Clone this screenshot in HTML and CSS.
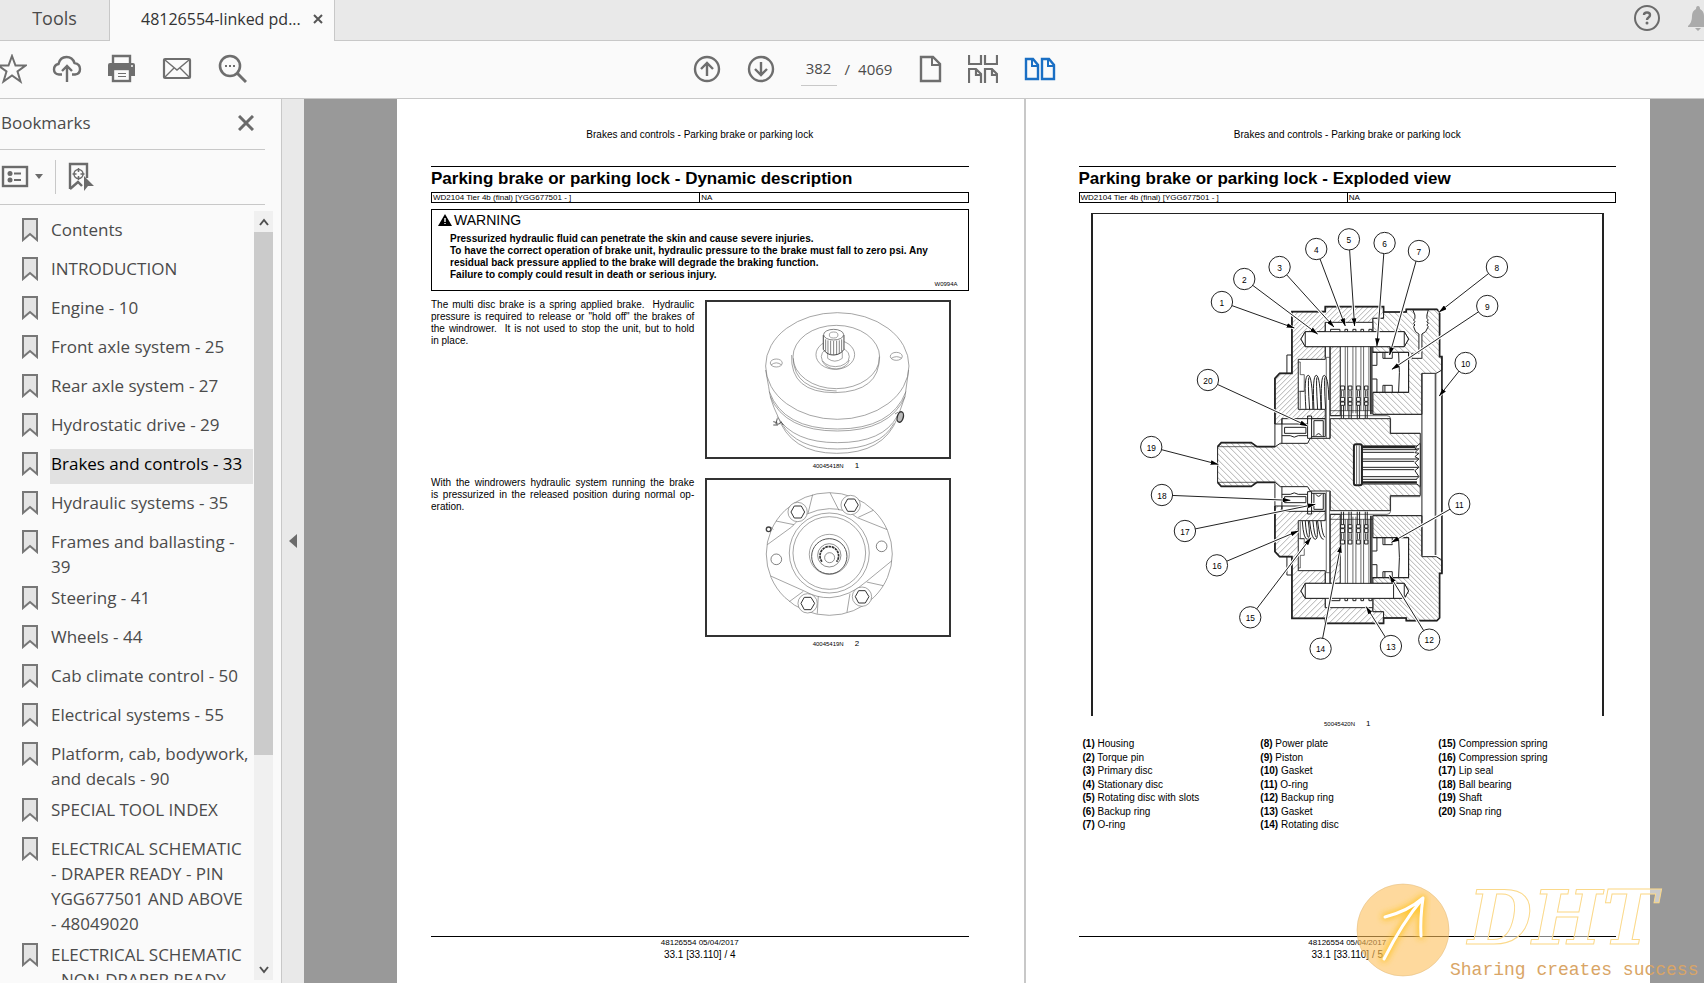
FILE: index.html
```html
<!DOCTYPE html>
<html lang="en">

<head>
  <meta charset="UTF-8">
  <meta name="viewport" content="width=device-width, initial-scale=1.0">
  <title>48126554-linked pdf</title>
  <link rel="stylesheet" href="styles.css">
</head>

<body>
  <!-- shared icon -->
  <svg class="defs" width="0" height="0" aria-hidden="true">
    <symbol id="bookmark" viewBox="0 0 16 24">
      <path d="M1 1H15V22L8 16L1 22Z" fill="#e4e4e4" stroke="#777" stroke-width="2"/>
    </symbol>
  </svg>

  <div class="app">
    <header class="tabs">
      <button class="tab">Tools</button>
      <div class="tab active">
        <span>48126554-linked pd...</span>
        <button aria-label="Close tab"><svg width="10" height="10" viewBox="0 0 10 10"><path d="M1 1L9 9M9 1L1 9" stroke="#555" stroke-width="2"/></svg></button>
      </div>
      <div class="tabs-right">
        <button aria-label="Help">
          <svg width="28" height="28" viewBox="0 0 28 28"><circle cx="14" cy="14" r="12" fill="none" stroke="#6b6b6b" stroke-width="2"/><path d="M11 11Q11 8.500 14 8.500Q17 8.500 17 11Q17 12.500 15.500 13.500Q14 14.500 14 16" fill="none" stroke="#6b6b6b" stroke-width="2.400"/><circle cx="14" cy="19" r="1.500" fill="#6b6b6b"/></svg>
        </button>
        <button aria-label="Notifications">
          <svg width="24" height="28" viewBox="0 0 24 28"><path d="M12 2Q14 2 14 5Q18 7 18 12Q18 19 22 22V23H2V22Q6 19 6 12Q6 7 10 5Q10 2 12 2ZM9 24H15L12 27Z" fill="#ababab"/></svg>
        </button>
      </div>
    </header>

    <nav class="toolbar">
      <div class="tools-left">
        <button aria-label="Star"><svg width="30" height="30" viewBox="0 0 30 30"><path d="M15 2L18.500 11.500H28.500L20.500 17.500L23.500 27.500L15 21.500L6.500 27.500L9.500 17.500L1.500 11.500H11.500Z" fill="none" stroke="#6e6e6e" stroke-width="2"/></svg></button>
        <button aria-label="Upload"><svg width="30" height="30" viewBox="0 0 30 30"><path d="M10 20.500H7Q2 20 2 15.500Q2 11 6.500 10Q8 3 14.500 3Q20.500 3 22.500 9Q28 10 28 15Q28 20 23 20.500H20" fill="none" stroke="#6e6e6e" stroke-width="2.400"/><path d="M15 28V13M10 17L15 12L20 17" fill="none" stroke="#6e6e6e" stroke-width="2.400"/></svg></button>
        <button aria-label="Print"><svg width="30" height="30" viewBox="0 0 30 30"><path d="M6 10V2H23V10" fill="none" stroke="#6e6e6e" stroke-width="2.400"/><path d="M3 9H26Q28 9 28 11V22H1V11Q1 9 3 9Z" fill="#6e6e6e"/><rect x="6" y="15" width="17" height="12" fill="#fafafa" stroke="#6e6e6e" stroke-width="2.400"/><path d="M11 19.500H19M11 22.500H19" stroke="#6e6e6e"/><circle cx="25" cy="12" r="1" fill="#fafafa"/></svg></button>
        <button aria-label="Email"><svg width="30" height="30" viewBox="0 0 30 30"><rect x="2" y="5" width="26" height="19" rx="1" fill="none" stroke="#6e6e6e" stroke-width="2.200"/><path d="M3 6L15 16L27 6M3 23L12 14M27 23L18 14" fill="none" stroke="#6e6e6e" stroke-width="1.400"/></svg></button>
        <button aria-label="Search"><svg width="30" height="30" viewBox="0 0 30 30"><circle cx="13" cy="12" r="10" fill="none" stroke="#6e6e6e" stroke-width="2.600"/><path d="M20 19L29 28" stroke="#6e6e6e" stroke-width="3"/><path d="M8 12H10M12 12H14M16 12H18" stroke="#6e6e6e" stroke-width="2"/></svg></button>
      </div>
      <div class="tools-center">
        <button aria-label="Previous page"><svg width="28" height="28" viewBox="0 0 28 28"><circle cx="14" cy="14" r="12" fill="none" stroke="#6e6e6e" stroke-width="2.400"/><path d="M14 21V8M8 14L14 8L20 14" fill="none" stroke="#6e6e6e" stroke-width="2.400"/></svg></button>
        <button aria-label="Next page"><svg width="28" height="28" viewBox="0 0 28 28"><circle cx="14" cy="14" r="12" fill="none" stroke="#6e6e6e" stroke-width="2.400"/><path d="M14 7V20M8 14L14 20L20 14" fill="none" stroke="#6e6e6e" stroke-width="2.400"/></svg></button>
        <div class="page-number">
          <input type="text" value="382" aria-label="Page number">
          <span>/</span>
          <span>4069</span>
        </div>
        <button aria-label="Single page"><svg width="24" height="28" viewBox="0 0 24 28"><path d="M3 2H15L22 9V26H3Z" fill="none" stroke="#6e6e6e" stroke-width="2.400"/><path d="M14 2V10H22" fill="none" stroke="#6e6e6e" stroke-width="2"/></svg></button>
        <button aria-label="Scrolling"><svg width="30" height="30" viewBox="0 0 30 30"><path d="M1 1V10H13V1M17 1V10H29V1M1 29V15H8L13 20V29M17 29V15H24L29 20V29M8 15V21H13M24 15V21H29" fill="none" stroke="#6e6e6e" stroke-width="2.200"/></svg></button>
        <button aria-label="Two pages"><svg width="32" height="24" viewBox="0 0 32 24"><path d="M2 2H9L14 8V22H2ZM18 2H25L30 8V22H18Z" fill="none" stroke="#1a6fc4" stroke-width="2.400"/><path d="M8 2V9H14M24 2V9H30" fill="none" stroke="#1a6fc4" stroke-width="2"/></svg></button>
      </div>
    </nav>

    <div class="workspace">
      <aside class="sidebar">
        <div class="sidebar-head">
          <h2>Bookmarks</h2>
          <button aria-label="Close bookmarks"><svg width="16" height="16" viewBox="0 0 16 16"><path d="M1 1L15 15M15 1L1 15" stroke="#6b6b6b" stroke-width="3"/></svg></button>
        </div>
        <div class="sidebar-tools">
          <button aria-label="Options"><svg width="42" height="24" viewBox="0 0 42 24"><rect x="2" y="2" width="24" height="19" fill="none" stroke="#6b6b6b" stroke-width="2.400"/><circle cx="9" cy="8.500" r="2.500" fill="#6b6b6b"/><circle cx="9" cy="15" r="2.500" fill="#6b6b6b"/><path d="M13 8.500H20M13 15H20" stroke="#6b6b6b" stroke-width="2"/><path d="M34 9H42L38 14Z" fill="#6b6b6b"/></svg></button>
          <button class="find" aria-label="Find bookmark"><svg width="26" height="30" viewBox="0 0 26 30"><path d="M2 27V2H19V16M2 27L10 20L14 24" fill="none" stroke="#6b6b6b" stroke-width="2.400"/><circle cx="10.500" cy="12" r="4.500" fill="none" stroke="#6b6b6b" stroke-width="1.500"/><path d="M10.500 6V10M10.500 14V18M4.500 12H8.500M12.500 12H16.500" stroke="#6b6b6b" stroke-width="1.500"/><path d="M16 14V29L20 24H26Z" fill="#6b6b6b"/></svg></button>
        </div>
        <div class="sidebar-body">
          <ul class="bookmarks">
            <li><svg><use href="#bookmark"/></svg><a href="#">Contents</a></li>
            <li><svg><use href="#bookmark"/></svg><a href="#">INTRODUCTION</a></li>
            <li><svg><use href="#bookmark"/></svg><a href="#">Engine - 10</a></li>
            <li><svg><use href="#bookmark"/></svg><a href="#">Front axle system - 25</a></li>
            <li><svg><use href="#bookmark"/></svg><a href="#">Rear axle system - 27</a></li>
            <li><svg><use href="#bookmark"/></svg><a href="#">Hydrostatic drive - 29</a></li>
            <li><svg><use href="#bookmark"/></svg><a href="#" class="current">Brakes and controls - 33</a></li>
            <li><svg><use href="#bookmark"/></svg><a href="#">Hydraulic systems - 35</a></li>
            <li><svg><use href="#bookmark"/></svg><a href="#">Frames and ballasting -<br>39</a></li>
            <li><svg><use href="#bookmark"/></svg><a href="#">Steering - 41</a></li>
            <li><svg><use href="#bookmark"/></svg><a href="#">Wheels - 44</a></li>
            <li><svg><use href="#bookmark"/></svg><a href="#">Cab climate control - 50</a></li>
            <li><svg><use href="#bookmark"/></svg><a href="#">Electrical systems - 55</a></li>
            <li><svg><use href="#bookmark"/></svg><a href="#">Platform, cab, bodywork,<br>and decals - 90</a></li>
            <li><svg><use href="#bookmark"/></svg><a href="#">SPECIAL TOOL INDEX</a></li>
            <li><svg><use href="#bookmark"/></svg><a href="#">ELECTRICAL SCHEMATIC<br>- DRAPER READY - PIN<br>YGG677501 AND ABOVE<br>- 48049020</a></li>
            <li><svg><use href="#bookmark"/></svg><a href="#">ELECTRICAL SCHEMATIC<br>- NON-DRAPER READY</a></li>
          </ul>
          <div class="scrollbar">
            <button aria-label="Scroll up"><svg width="10" height="8" viewBox="0 0 10 8"><path d="M1 7L5 2L9 7" fill="none" stroke="#505050" stroke-width="2"/></svg></button>
            <div class="track"><div class="thumb"></div></div>
            <button aria-label="Scroll down"><svg width="10" height="8" viewBox="0 0 10 8"><path d="M1 1L5 6L9 1" fill="none" stroke="#505050" stroke-width="2"/></svg></button>
          </div>
        </div>
      </aside>

      <button class="collapse" aria-label="Collapse panel"><svg width="8" height="14" viewBox="0 0 8 14"><path d="M8 0V14L0 7Z" fill="#6b6b6b"/></svg></button>

      <main class="document">
        <article class="page page-left">
          <p class="running-head">Brakes and controls - Parking brake or parking lock</p>
          <h1>Parking brake or parking lock - Dynamic description</h1>
          <table class="model">
            <tr><td>WD2104 Tier 4b (final) [YGG677501 - ]</td><td>NA</td></tr>
          </table>

          <section class="warning">
            <h3><svg width="14" height="12" viewBox="0 0 14 12"><path d="M7 0L14 12H0Z" fill="#000"/><path d="M7 4V8M7 9V10" stroke="#fff" stroke-width="1.400"/></svg>WARNING</h3>
            <p>Pressurized hydraulic fluid can penetrate the skin and cause severe injuries.<br>
              To have the correct operation of brake unit, hydraulic pressure to the brake must fall to zero psi. Any<br>
              residual back pressure applied to the brake will degrade the braking function.<br>
              Failure to comply could result in death or serious injury.</p>
            <small>W0994A</small>
          </section>

          <div class="steps">
            <p>The multi disc brake is a spring applied brake.&nbsp; Hydraulic pressure is required to release or "hold off" the brakes of the windrower.&nbsp; It is not used to stop the unit, but to hold in&nbsp;place.</p>
            <figure>
              <svg class="drawing" viewBox="52 36 722 465" fill="none" stroke="#777" stroke-width="2">
                <!-- flange -->
                <ellipse cx="442" cy="228" rx="215" ry="160"/>
                <path d="M227 240L236 290Q240 330 262 375Q300 490 440 490Q580 490 622 385L645 320L656 240"/>
                <path d="M238 305Q280 417 442 417Q605 417 648 305M241 320Q285 423 442 423Q600 423 645 320"/>
                <path d="M262 380Q310 458 442 458Q580 458 622 378M275 400Q320 477 442 477Q570 477 612 400"/>
                <ellipse cx="439" cy="201" rx="130" ry="95"/>
                <path d="M305 195Q300 308 435 308Q570 305 568 200M310 205Q312 300 440 303"/>
                <ellipse cx="436" cy="194" rx="58" ry="44"/>
                <ellipse cx="436" cy="200" rx="42" ry="30"/>
                <path d="M396 212Q410 238 440 237Q472 233 478 210"/>
                <!-- splined stub -->
                <path d="M413 180V205Q434 222 457 205V180" fill="#fff"/>
                <path d="M400 135V178Q412 196 432 195Q452 194 462 178V135" fill="#fff" stroke="#444" stroke-width="3"/>
                <ellipse cx="431" cy="134" rx="30" ry="16" fill="#fff" stroke="#444"/>
                <ellipse cx="431" cy="135" rx="13" ry="9"/>
                <path d="M407 148V184M414 151V190M422 152V193M431 153V194M440 152V193M448 151V190M455 148V184" stroke="#444"/>
                <!-- holes -->
                <ellipse cx="259" cy="219" rx="18" ry="12"/><path d="M243 225Q259 212 275 225"/>
                <ellipse cx="619" cy="199" rx="18" ry="12"/><path d="M604 205Q620 195 635 205"/>
                <!-- fittings -->
                <path d="M262 385L258 402H268L273 395L280 405M250 395L262 398M250 405H264" stroke="#555" stroke-width="3"/>
                <ellipse cx="631" cy="381" rx="9" ry="16" transform="rotate(15 631 381)" fill="#bbb" stroke="#333" stroke-width="4"/>
                <path d="M615 372L625 366" stroke="#555"/>
              </svg>
              <figcaption><span>40045418N</span><b>1</b></figcaption>
            </figure>

            <p>With the windrowers hydraulic system running the brake is&nbsp;pressurized in the released position during normal op&shy;eration.</p>
            <figure>
              <svg class="drawing" viewBox="52 571 722 465" fill="none" stroke="#777" stroke-width="2">
                <ellipse cx="418" cy="793" rx="189" ry="184"/>
                <circle cx="418" cy="790" r="120"/><circle cx="418" cy="790" r="109"/>
                <path d="M232 765L305 712Q345 660 418 657Q470 657 502 684L592 720M242 859L345 905Q380 925 420 924Q480 920 530 875L606 813"/>
                <path d="M368 615L354 672M420 609L447 662M258 694L312 705M505 683L550 662M298 936L340 905M385 920L382 972M480 912L471 968M530 877L580 888"/>
                <!-- bolts -->
                <circle cx="323" cy="667" r="29" fill="#fff"/><path d="M344 667L334 685H313L303 667L313 649H334Z" stroke="#333" stroke-width="3"/>
                <circle cx="482" cy="646" r="29" fill="#fff"/><path d="M505 646L494 665H473L463 646L473 628H494Z" stroke="#333" stroke-width="3"/>
                <circle cx="353" cy="941" r="29" fill="#fff"/><path d="M374 941L363 960H343L333 941L343 923H363Z" stroke="#333" stroke-width="3"/>
                <circle cx="516" cy="921" r="29" fill="#fff"/><path d="M537 921L526 940H506L496 921L506 903H526Z" stroke="#333" stroke-width="3"/>
                <circle cx="259" cy="809" r="16" stroke="#444"/><circle cx="575" cy="770" r="16" stroke="#444"/>
                <!-- hub -->
                <circle cx="418" cy="794" r="60"/><circle cx="418" cy="800" r="53" stroke="#555" stroke-width="3"/>
                <circle cx="418" cy="797" r="35" stroke="#555"/>
                <path d="M396 816A28 28 0 1 1 440 816" stroke="#333" stroke-width="5" stroke-dasharray="8 2"/>
                <circle cx="419" cy="804" r="15" stroke="#555"/>
                <circle cx="236" cy="719" r="7" stroke="#444" stroke-width="4"/><path d="M243 712L250 720"/>
              </svg>
              <figcaption><span>40045419N</span><b>2</b></figcaption>
            </figure>
          </div>

          <footer>
            <p class="rev">48126554 05/04/2017</p>
            <p>33.1 [33.110] / 4</p>
          </footer>
        </article>

        <article class="page page-right">
          <p class="running-head">Brakes and controls - Parking brake or parking lock</p>
          <h1>Parking brake or parking lock - Exploded view</h1>
          <table class="model">
            <tr><td>WD2104 Tier 4b (final) [YGG677501 - ]</td><td>NA</td></tr>
          </table>

          <figure class="exploded">
            <svg class="drawing" viewBox="-531 -228 1527 1506" fill="none" stroke="#222" stroke-width="3">
              <defs>
                <pattern id="hatch-a" width="15" height="15" patternUnits="userSpaceOnUse"><rect width="15" height="15" fill="#fff" stroke="none"/><path d="M-2 17L17 -2M-2 2L2 -2M13 17L17 13" stroke="#888" stroke-width="2"/></pattern>
                <pattern id="hatch-b" width="18" height="18" patternUnits="userSpaceOnUse"><rect width="18" height="18" fill="#fff" stroke="none"/><path d="M-2 -2L20 20M16 -2L20 2M-2 16L2 20" stroke="#888" stroke-width="2"/></pattern>
                <marker id="arrow" viewBox="0 0 24 14" refX="23" refY="7" markerWidth="24" markerHeight="14" markerUnits="userSpaceOnUse" orient="auto"><path d="M0 0L24 7L0 14Z" fill="#000" stroke="none"/></marker>

                <path id="housing" d="M65 65H165V50H340V85H308V97H165V125H105L92 147L105 170H165V208H84V358H165V386H35V402H14V265L28 250H65Z"/>
                <path id="plate" d="M340 66H408V58H500L508 66V200H515V240L498 250H455V373H308V307H415V187H308V170H402L415 147L402 125H308V85H340Z"/>
                <path id="disc" d="M180 170H210V377H180Z"/>

                <g id="half">
                  <!-- outer edge and tab -->
                  <path d="M14 402V265L28 250H65V65H165V50H340V66H408V58H500L508 66V200H515V525" stroke-width="5"/>
                  <path d="M50 250V195H65M14 402V470"/>
                  <!-- torque pin -->
                  <path d="M105 125H402L415 147L402 170H105L92 147Z" fill="#fff"/><path d="M105 125V170M402 125V170"/>
                  <!-- stationary and rotating discs -->
                  <path d="M165 97V125M308 97V125M165 170V202M225 170V362M232 170V362M248 170V370M257 170V370M272 170V362M280 170V362M296 170V362M306 170V373" stroke-width="2"/>
                  <path d="M302 170V373" stroke-width="5"/>
                  <path d="M181 125V118H209V125M224 125V118H232V125M248 125V118H257V125M272 125V118H280V125M296 125V118H305V125"/>
                  <path d="M211 288H223V300H211ZM211 322H223V334H211ZM211 336H223V346H211ZM234 288H245V300H234ZM234 322H245V334H234ZM234 336H245V346H234ZM259 288H270V300H259ZM259 322H270V334H259ZM259 336H270V346H259ZM283 288H293V300H283ZM283 322H293V334H283ZM283 336H293V346H283ZM213 302V320M221 302V320M236 302V320M243 302V320M261 302V320M268 302V320M285 302V320M291 302V320" stroke-width="3"/>
                  <path d="M213 347V385M220 347V385M236 347V385M243 347V385M261 347V385M268 347V385M285 347V385M291 347V385"/>
                  <path d="M180 377H350Q360 377 361 386V430H450M308 373H455M180 362H308" stroke-width="2"/>
                  <!-- piston and rings -->
                  <path d="M308 187H415V307H308M385 187Q390 247 385 307M306 187H320V226H306M306 267H320V307"/>
                  <path d="M338 187V205H366V187M338 307V286H366V307M344 187V205M344 286V307"/>
                  <!-- thin plate and strip -->
                  <path d="M178 170V445M168 202H178M168 202V445M84 216H90V254H102V304H90V356M84 304H102" stroke-width="2"/>
                  <!-- bearing and lip seal -->
                  <path d="M35 386V460M35 402H112M43 412H107V430H43ZM35 437H60Q72 446 84 437H112M112 378H124V445H112ZM124 386H165V440H124M131 440V392H159V440M137 437Q145 425 153 437"/>
                </g>

                <g id="leaders">
                  <path d="M-145 36L72 114"/><path d="M-78 -33L142 132"/><path d="M28 -69L191 111"/><path d="M138 -123L225 108"/><path d="M236 -152L253 108"/>
                  <path d="M343 -141L320 168"/><path d="M446 -117L358 195"/><path d="M680 -69L507 66"/><path d="M651 48L365 238"/><path d="M586 219L507 318"/>
                  <path d="M567 642L364 757"/><path d="M477 1049L358 856"/><path d="M362 1068L288 950"/><path d="M151 1076L212 765"/><path d="M-60 982L122 743"/>
                  <path d="M-160 826L84 723"/><path d="M-256 723L135 643"/><path d="M-325 615L60 631"/><path d="M-357 471L-156 523"/><path d="M-187 270L112 408"/>
                </g>
              </defs>

              <!-- hatched castings, lower half mirrored -->
              <use href="#housing" fill="url(#hatch-a)"/>
              <use href="#plate" fill="url(#hatch-b)"/>
              <use href="#disc" fill="url(#hatch-a)"/>
              <g transform="translate(0 1050) scale(1 -1)">
                <use href="#housing" fill="url(#hatch-b)"/>
                <use href="#plate" fill="url(#hatch-a)"/>
                <use href="#disc" fill="url(#hatch-b)"/>
              </g>

              <!-- shaft -->
              <path d="M-158 470L-147 458H-57L-40 470H15L30 460H112L120 445H180V386H360V430H450V617H360V662H180V603H120L112 590H30L15 577H-40L-57 589H-147L-158 577Z" fill="url(#hatch-b)"/>
              <path d="M-158 470L-147 458H-57L-40 470H15M-158 577L-147 589H-57L-40 577H15" stroke-width="5"/>
              <path d="M-158 470H-40M-158 577H-40" stroke-width="2"/>

              <use href="#half"/>
              <use href="#half" transform="translate(0 1050) scale(1 -1)"/>
              <path d="M455 250V797M495 252V795" stroke-width="3"/>
              <path d="M499 252V795" stroke="#999" stroke-width="2"/>

              <!-- splined bore -->
              <path d="M275 468H440L450 460V590L440 582H275Z" fill="#fff"/>
              <path d="M275 471H435M275 577H440" stroke-width="7"/>
              <path d="M275 479H440M275 487H432M275 507H445M275 514H432M275 532H445M275 539H432M275 560H445M275 568H440" stroke-width="3"/>
              <path d="M440 468L434 478L446 476L434 488L446 490L434 500L446 507L434 518L446 532L434 542L446 560L438 568"/>
              <rect x="251" y="463" width="24" height="123" rx="6" fill="#fff" stroke-width="6"/>
              <path d="M259 466V583M267 466V583" stroke-width="2"/>

              <!-- threaded port -->
              <path d="M428 60H474L470 75V85L474 90L470 95L474 100L470 105L474 110L466 125L455 132V205H425V190H446V132L436 125L430 110L434 105L430 100L434 95L430 90L434 85V75Z" fill="#fff"/>
              <path d="M370 880V925"/>

              <!-- springs -->
              <path d="M107 358Q100 256 114 256Q126 256 128 358M118 358Q112 270 116 262M131 358Q126 256 138 256Q150 256 152 358M142 358Q137 270 140 262M154 358Q150 256 162 256Q174 256 176 330M166 358Q161 270 164 262"/>
              <path d="M96 693Q100 750 112 748Q122 746 114 693M105 693Q108 735 114 742M118 693Q124 750 136 748Q146 746 138 693M128 693Q132 735 138 742M142 693Q148 750 160 748M152 693Q156 735 164 742"/>

              <use href="#leaders" stroke="#fff" stroke-width="9"/>
              <use class="leader" href="#leaders" stroke="#222" stroke-width="3"/>
              <g fill="#fff">
                <circle cx="-145" cy="36" r="32"/><circle cx="-78" cy="-33" r="32"/><circle cx="28" cy="-69" r="32"/><circle cx="138" cy="-123" r="32"/><circle cx="236" cy="-152" r="32"/>
                <circle cx="343" cy="-141" r="32"/><circle cx="446" cy="-117" r="32"/><circle cx="680" cy="-69" r="32"/><circle cx="651" cy="48" r="32"/><circle cx="586" cy="219" r="32"/>
                <circle cx="567" cy="642" r="32"/><circle cx="477" cy="1049" r="32"/><circle cx="362" cy="1068" r="32"/><circle cx="151" cy="1076" r="32"/><circle cx="-60" cy="982" r="32"/>
                <circle cx="-160" cy="826" r="32"/><circle cx="-256" cy="723" r="32"/><circle cx="-325" cy="615" r="32"/><circle cx="-357" cy="471" r="32"/><circle cx="-187" cy="270" r="32"/>
              </g>
              <g class="callouts">
                <text x="-145" y="47">1</text><text x="-78" y="-22">2</text><text x="28" y="-58">3</text><text x="138" y="-112">4</text><text x="236" y="-141">5</text>
                <text x="343" y="-130">6</text><text x="446" y="-106">7</text><text x="680" y="-58">8</text><text x="651" y="59">9</text><text x="586" y="230">10</text>
                <text x="567" y="653">11</text><text x="477" y="1060">12</text><text x="362" y="1079">13</text><text x="151" y="1087">14</text><text x="-60" y="993">15</text>
                <text x="-160" y="837">16</text><text x="-256" y="734">17</text><text x="-325" y="626">18</text><text x="-357" y="482">19</text><text x="-187" y="281">20</text>
              </g>
            </svg>
            <figcaption><span>50045420N</span><b>1</b></figcaption>
          </figure>

          <div class="legend">
            <ul>
              <li><b>(1)</b> Housing</li>
              <li><b>(2)</b> Torque pin</li>
              <li><b>(3)</b> Primary disc</li>
              <li><b>(4)</b> Stationary disc</li>
              <li><b>(5)</b> Rotating disc with slots</li>
              <li><b>(6)</b> Backup ring</li>
              <li><b>(7)</b> O-ring</li>
            </ul>
            <ul>
              <li><b>(8)</b> Power plate</li>
              <li><b>(9)</b> Piston</li>
              <li><b>(10)</b> Gasket</li>
              <li><b>(11)</b> O-ring</li>
              <li><b>(12)</b> Backup ring</li>
              <li><b>(13)</b> Gasket</li>
              <li><b>(14)</b> Rotating disc</li>
            </ul>
            <ul>
              <li><b>(15)</b> Compression spring</li>
              <li><b>(16)</b> Compression spring</li>
              <li><b>(17)</b> Lip seal</li>
              <li><b>(18)</b> Ball bearing</li>
              <li><b>(19)</b> Shaft</li>
              <li><b>(20)</b> Snap ring</li>
            </ul>
          </div>

          <footer>
            <p class="rev">48126554 05/04/2017</p>
            <p>33.1 [33.110] / 5</p>
          </footer>
        </article>

        <!-- logo over the corner of the page -->
        <div class="watermark">
          <svg width="348" height="100" viewBox="0 0 348 100">
            <defs><filter id="glow" x="-20%" y="-20%" width="140%" height="140%"><feGaussianBlur stdDeviation="3"/></filter></defs>
            <circle cx="47" cy="47" r="46" fill="#fdbf5c" fill-opacity=".6" stroke="#e0b878" stroke-width=".5"/>
            <path d="M28 76Q46 40 67 15M29 34Q52 28 67 15Q64 36 65 53" fill="none" stroke="#ffc525" stroke-width="6" stroke-linecap="round" stroke-linejoin="round" filter="url(#glow)"/>
            <path d="M28 76Q46 40 67 15M29 34Q52 28 67 15Q64 36 65 53" fill="none" stroke="#fff" stroke-width="3" stroke-linecap="round" stroke-linejoin="round"/>
            <text class="brand" x="112" y="61">DHT</text>
            <text class="slogan" x="94" y="92">Sharing creates success</text>
          </svg>
        </div>
      </main>
    </div>
  </div>
</body>

</html>
```

FILE: styles.css
```css
* {
  box-sizing: border-box;
}

body {
  margin: 0;
  font-family: "Open Sans", "Noto Sans", sans-serif;
  color: #4b4b4b;
  background-color: #fafafa;
  overflow: hidden;
}

h1, h2, h3, p, ul, figure {
  margin: 0;
  padding: 0;
}

ul {
  list-style: none;
}

button {
  display: flex;
  align-items: center;
  justify-content: center;
  padding: 0;
  border: none;
  background: none;
  font: inherit;
  color: inherit;
  cursor: pointer;
}

.defs {
  position: absolute;
}

.app {
  display: flex;
  flex-direction: column;
  height: 100vh;
}

/* tabs */
.tabs {
  display: flex;
  flex: none;
  height: 41px;
  background-color: #e9e9e9;
}

.tab {
  width: 110px;
  padding-bottom: 4px;
  font-size: 18px;
  border-right: 1px solid #c8c8c8;
  border-bottom: 1px solid #c8c8c8;
}

.tab.active {
  display: flex;
  align-items: center;
  gap: 12px;
  width: 225px;
  padding-left: 31px;
  font-size: 16px;
  color: #333;
  white-space: nowrap;
  background-color: #fafafa;
  border-bottom: none;
}

.tabs-right {
  display: flex;
  flex: 1;
  align-items: center;
  justify-content: flex-end;
  gap: 25px;
  padding-bottom: 4px;
  border-bottom: 1px solid #c8c8c8;
  overflow: hidden;
}

.tabs-right button:last-child {
  margin-right: -6px;
}

/* toolbar */
.toolbar {
  display: grid;
  grid-template-columns: 1fr auto 1fr;
  align-items: center;
  flex: none;
  height: 58px;
  padding-bottom: 2px;
  border-bottom: 1px solid #c8c8c8;
}

.tools-left {
  display: flex;
  gap: 25px;
  margin-left: -3px;
}

.tools-center {
  display: flex;
  align-items: center;
  gap: 26px;
  padding-left: 45px;
}

.page-number {
  display: flex;
  align-items: center;
  gap: 8px;
  font-size: 15px;
}

.page-number input {
  width: 36px;
  height: 34px;
  padding: 0;
  font: inherit;
  color: inherit;
  text-align: center;
  background: none;
  border: none;
  border-bottom: 1px solid #c8c8c8;
}

/* sidebar */
.workspace {
  display: flex;
  flex: 1;
  min-height: 0;
}

.sidebar {
  display: flex;
  flex: none;
  flex-direction: column;
  width: 282px;
  padding-bottom: 3px;
  border-right: 1px solid #c8c8c8;
}

.sidebar-head {
  display: flex;
  align-items: center;
  justify-content: space-between;
  height: 51px;
  margin-right: 16px;
  padding: 0 11px 3px 1px;
  border-bottom: 1px solid #c8c8c8;
}

.sidebar-head h2 {
  font-size: 17px;
  font-weight: normal;
}

.sidebar-tools {
  display: flex;
  align-items: center;
  gap: 12px;
  height: 55px;
  margin-right: 16px;
  padding-left: 1px;
  border-bottom: 1px solid #c8c8c8;
}

.sidebar-tools .find {
  height: 34px;
  padding-left: 12px;
  border-left: 1px solid #c8c8c8;
}

.sidebar-body {
  display: flex;
  flex: 1;
  min-height: 0;
  margin-top: 6px;
}

.bookmarks {
  flex: 1;
  padding: 4px 1px 0 22px;
  overflow: hidden;
}

.bookmarks li {
  display: flex;
  gap: 12px;
  margin-bottom: 4px;
}

.bookmarks svg {
  flex: none;
  width: 16px;
  height: 24px;
  margin-top: 3px;
}

.bookmarks a {
  flex: 1;
  min-height: 35px;
  padding: 2px 0 0 1px;
  font-size: 17px;
  line-height: 25px;
  color: #4b4b4b;
  text-decoration: none;
  white-space: nowrap;
}

.bookmarks a.current {
  color: #000;
  background-color: #e1e1e1;
}

.scrollbar {
  display: flex;
  flex-direction: column;
  width: 19px;
  margin-right: 8px;
  background-color: #f0f0f0;
}

.scrollbar button {
  height: 21px;
}

.track {
  flex: 1;
}

.thumb {
  height: 72%;
  background-color: #cbcbcb;
}

.collapse {
  flex: none;
  width: 22px;
  background-color: #e9e9e9;
}

/* document */
.document {
  position: relative;
  display: flex;
  flex: 1;
  padding: 0 54px 0 93px;
  font-family: "Liberation Sans", Arial, sans-serif;
  font-size: 10px;
  line-height: 12px;
  color: #000;
  background-color: #999;
  overflow: hidden;
}

.page {
  display: flex;
  flex: 1;
  flex-direction: column;
  padding: 30px 55px 22px 34px;
  background-color: #fff;
}

.page-right {
  padding: 30px 34px 22px 53px;
  border-left: 2px solid #c8c8c8;
}

.running-head {
  text-align: center;
}

.page h1 {
  margin-top: 25px;
  font-size: 17px;
  line-height: 23px;
  border-top: 1px solid #000;
}

.model {
  width: 100%;
  margin-top: 2px;
  table-layout: fixed;
  border-collapse: collapse;
  font-size: 8px;
  line-height: 9px;
}

.model td {
  padding: 0 1px;
  border: 1px solid #000;
}

.warning {
  margin-top: 6px;
  padding: 3px 10px 3px 18px;
  border: 1px solid #000;
}

.warning h3 {
  display: flex;
  align-items: center;
  gap: 2px;
  margin-left: -12px;
  font-size: 14px;
  font-weight: normal;
  line-height: 14px;
}

.warning p {
  margin-top: 6px;
  font-weight: bold;
  white-space: nowrap;
}

.warning small {
  display: block;
  font-size: 6px;
  line-height: 6px;
  text-align: right;
}

.steps {
  display: grid;
  grid-template-columns: 263fr 245fr;
  gap: 7px 11px;
  margin-top: 8px;
  padding-right: 18px;
}

.steps p {
  text-align: justify;
}

.steps figure {
  margin-top: 1px;
}

.drawing {
  display: block;
  width: 100%;
}

.steps .drawing {
  height: 159px;
  border: 2px solid #333;
}

figcaption {
  display: flex;
  justify-content: center;
  gap: 11px;
  margin-top: 3px;
  padding-left: 16px;
  font-size: 6px;
  line-height: 8px;
}

figcaption b {
  font-size: 8px;
  font-weight: normal;
}

.exploded {
  margin: 10px 12px 0 12px;
}

.exploded .drawing {
  height: 503px;
  border: 2px solid #222;
  border-top-width: 1px;
  border-bottom: none;
}

.exploded figcaption {
  margin-top: 4px;
  padding-left: 0;
}

.leader {
  marker-end: url(#arrow);
}

.callouts {
  font-size: 25px;
  fill: #000;
  stroke: none;
  text-anchor: middle;
}

.legend {
  display: grid;
  grid-template-columns: repeat(3, 1fr);
  margin-top: 9px;
  padding-left: 4px;
}

.legend li {
  line-height: 14px;
}

.legend li:nth-child(even) {
  line-height: 13px;
}

.page footer {
  margin-top: auto;
  text-align: center;
  border-top: 1px solid #000;
}

.page .rev {
  font-size: 8px;
}

/* watermark */
.watermark {
  position: absolute;
  right: 0;
  bottom: 0;
}

.watermark svg {
  display: block;
}

.brand {
  font-family: "DejaVu Serif", serif;
  font-size: 74px;
  font-weight: bold;
  font-style: italic;
  fill: #fff;
  fill-opacity: .5;
  stroke: #fbd98a;
}

.slogan {
  font-family: "Liberation Mono", monospace;
  font-size: 18px;
  fill: #d9a566;
}
```
